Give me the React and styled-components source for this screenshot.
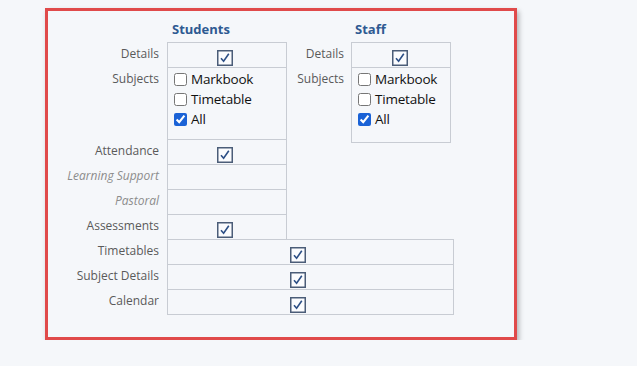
import React from 'react';
import styled, { createGlobalStyle } from 'styled-components';

const GlobalStyle = createGlobalStyle`
  html, body {
    margin: 0;
    background: #f5f7fa;
    font-family: "Open Sans", "Liberation Sans", sans-serif;
  }
`;

const Panel = styled.div`
  box-sizing: border-box;
  width: 472px;
  height: 332px;
  margin: 8px 0 0 45px;
  border: 3px solid #e04a4a;
  background: #f5f7fa;
  box-shadow: 2px 3px 5px rgba(0, 0, 0, 0.28);
`;

const Grid = styled.div`
  display: grid;
  grid-template-columns: 119px 120px 64px 100px 3px;
  grid-template-rows: 31px 25px 72px 25px 25px 25px 25px 25px 25px 26px;
`;

const Heading = styled.div`
  grid-column: ${p => p.$col};
  grid-row: 1;
  align-self: end;
  padding: 0 0 5px ${p => p.$pad}px;
  font-size: 13px;
  font-weight: 700;
  color: #2e5a92;
  line-height: 16px;
`;

const Label = styled.div`
  grid-column: ${p => p.$col || 1};
  grid-row: ${p => p.$row};
  text-align: right;
  padding: 4px ${p => p.$pad || 8}px 0 0;
  font-size: 12px;
  line-height: 16px;
  color: ${p => (p.$muted ? '#8c8c8c' : '#5a5a5a')};
  font-style: ${p => (p.$muted ? 'italic' : 'normal')};
  white-space: nowrap;
`;

const Cell = styled.div`
  box-sizing: border-box;
  grid-column: ${p => p.$col};
  grid-row: ${p => p.$row};
  height: ${p => (p.$h ? `${p.$h}px` : 'auto')};
  align-self: ${p => (p.$h ? 'start' : 'stretch')};
  border: 1px solid #c8ccd3;
  border-bottom: ${p => (p.$last ? '1px solid #c8ccd3' : 'none')};
  display: flex;
  justify-content: center;
  align-items: flex-start;
  padding: 7px ${p => p.$shift || 0}px 0 0;
`;

const ListCell = styled(Cell)`
  flex-direction: column;
  justify-content: flex-start;
  align-items: flex-start;
  padding: 1px 0 0 1px;
`;

const Option = styled.label`
  display: flex;
  align-items: center;
  height: 20px;
  font-size: 13.5px;
  color: #111;
  letter-spacing: -0.2px;

  input {
    margin: 0 4px 0 5px;
    width: 13px;
    height: 13px;
    accent-color: #1a62d6;
  }
`;

const Tick = () => (
  <svg width="16" height="16" viewBox="0 0 16 16">
    <rect x="0.75" y="0.75" width="14.5" height="14.5" fill="#fbfcfe" stroke="#4b5d78" strokeWidth="1.5" />
    <path d="M4 8.2 L6.6 11.2 L11.8 3.8" fill="none" stroke="#2c4f86" strokeWidth="1.6" />
  </svg>
);

const SubjectList = ({ row, col, h, last }) => (
  <ListCell $row={row} $col={col} $h={h} $last={last}>
    <Option><input type="checkbox" readOnly />Markbook</Option>
    <Option><input type="checkbox" readOnly />Timetable</Option>
    <Option><input type="checkbox" defaultChecked />All</Option>
  </ListCell>
);

const studentRows = [
  { name: 'Attendance', tick: true },
  { name: 'Learning Support', muted: true },
  { name: 'Pastoral', muted: true },
  { name: 'Assessments', tick: true },
];

const sharedRows = ['Timetables', 'Subject Details', 'Calendar'];

export default function App() {
  return (
    <>
      <GlobalStyle />
      <Panel>
        <Grid>
          <Heading $col={2} $pad={5}>Students</Heading>
          <Heading $col={4} $pad={4}>Staff</Heading>

          <Label $row={2}>Details</Label>
          <Cell $row={2} $col={2} $shift={4}><Tick /></Cell>
          <Label $row={3}>Subjects</Label>
          <SubjectList row={3} col={2} />

          <Label $row={2} $col={3} $pad={7}>Details</Label>
          <Cell $row={2} $col={4} $shift={2}><Tick /></Cell>
          <Label $row={3} $col={3} $pad={7}>Subjects</Label>
          <SubjectList row="3 / 5" col={4} h={76} last />

          {studentRows.map((r, i) => (
            <React.Fragment key={r.name}>
              <Label $row={4 + i} $muted={r.muted}>{r.name}</Label>
              <Cell $row={4 + i} $col={2} $shift={4}>{r.tick && <Tick />}</Cell>
            </React.Fragment>
          ))}

          {sharedRows.map((name, i) => (
            <React.Fragment key={name}>
              <Label $row={8 + i}>{name}</Label>
              <Cell $row={8 + i} $col="2 / 6" $shift={26} $last={i === sharedRows.length - 1}>
                <Tick />
              </Cell>
            </React.Fragment>
          ))}
        </Grid>
      </Panel>
    </>
  );
}
